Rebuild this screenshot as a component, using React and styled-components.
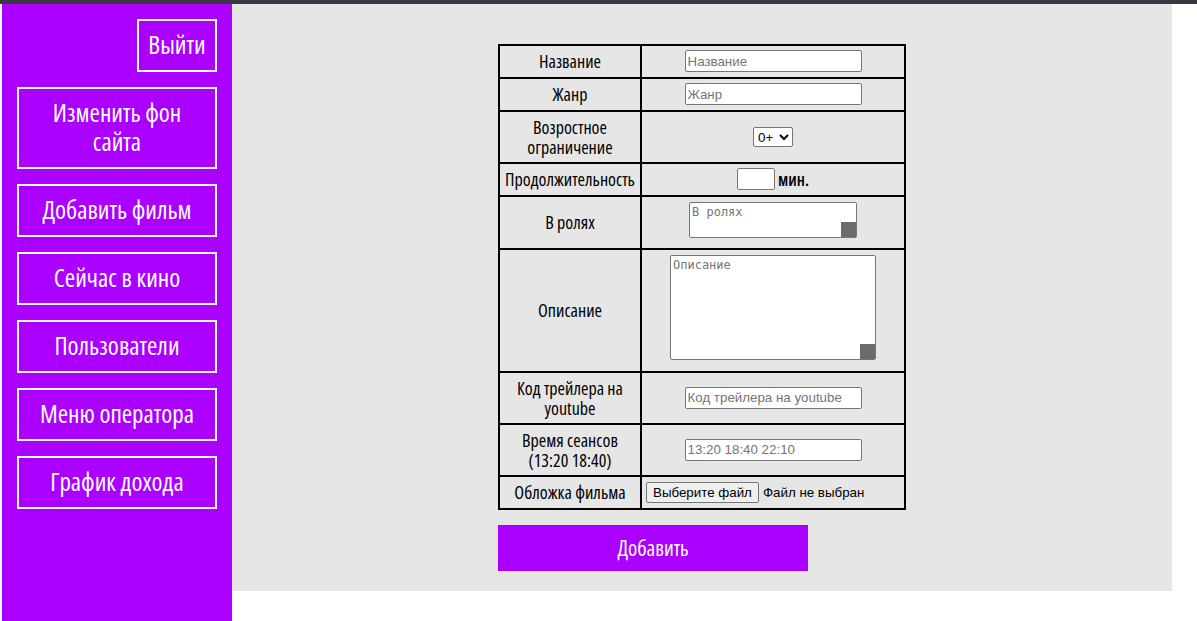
import React from "react";
import styled, { createGlobalStyle } from "styled-components";

const condensed = `"Open Sans", sans-serif`;

const GlobalStyle = createGlobalStyle`
    html, body {
        margin: 0;
        padding: 0;
        background: #ffffff;
    }
`;

const menu = [
    { label: "Изменить фон сайта", tall: true },
    { label: "Добавить фильм" },
    { label: "Сейчас в кино" },
    { label: "Пользователи" },
    { label: "Меню оператора" },
    { label: "График дохода" }
];

const App = () => {
    return (
        <>
            <GlobalStyle />
            <StyledTopBar />
            <StyledPage>
                <StyledSidebar>
                    <StyledExit>Выйти</StyledExit>
                    {menu.map((item, i) => (
                        <StyledMenuButton key={`menu-${i}`} $tall={item.tall}>
                            {item.label}
                        </StyledMenuButton>
                    ))}
                </StyledSidebar>
                <StyledMain>
                    <StyledForm>
                        <StyledTable>
                            <colgroup>
                                <col style={{ width: 142 }} />
                                <col />
                            </colgroup>
                            <tbody>
                                <StyledRow $h={33}>
                                    <StyledLabel>Название</StyledLabel>
                                    <StyledCell>
                                        <StyledInput placeholder="Название" />
                                    </StyledCell>
                                </StyledRow>
                                <StyledRow $h={33}>
                                    <StyledLabel>Жанр</StyledLabel>
                                    <StyledCell>
                                        <StyledInput placeholder="Жанр" />
                                    </StyledCell>
                                </StyledRow>
                                <StyledRow $h={52}>
                                    <StyledLabel>Возростное ограничение</StyledLabel>
                                    <StyledCell>
                                        <StyledSelect defaultValue="0+">
                                            <option>0+</option>
                                            <option>6+</option>
                                            <option>12+</option>
                                            <option>16+</option>
                                            <option>18+</option>
                                        </StyledSelect>
                                    </StyledCell>
                                </StyledRow>
                                <StyledRow $h={33}>
                                    <StyledLabel>Продолжительность</StyledLabel>
                                    <StyledCell>
                                        <StyledDuration>
                                            <StyledSmallInput />
                                            <StyledUnit>мин.</StyledUnit>
                                        </StyledDuration>
                                    </StyledCell>
                                </StyledRow>
                                <StyledRow $h={53}>
                                    <StyledLabel>В ролях</StyledLabel>
                                    <StyledCell>
                                        <StyledTextarea $w={168} $h={36} placeholder="В ролях" />
                                    </StyledCell>
                                </StyledRow>
                                <StyledRow $h={123}>
                                    <StyledLabel>Описание</StyledLabel>
                                    <StyledCell>
                                        <StyledTextarea $w={206} $h={105} placeholder="Описание" />
                                    </StyledCell>
                                </StyledRow>
                                <StyledRow $h={52}>
                                    <StyledLabel>Код трейлера на youtube</StyledLabel>
                                    <StyledCell>
                                        <StyledInput placeholder="Код трейлера на youtube" />
                                    </StyledCell>
                                </StyledRow>
                                <StyledRow $h={52}>
                                    <StyledLabel>Время сеансов (13:20 18:40)</StyledLabel>
                                    <StyledCell>
                                        <StyledInput placeholder="13:20 18:40 22:10" />
                                    </StyledCell>
                                </StyledRow>
                                <StyledRow $h={33}>
                                    <StyledLabel>Обложка фильма</StyledLabel>
                                    <StyledCell>
                                        <StyledFile>
                                            <StyledFileButton type="button">Выберите файл</StyledFileButton>
                                            <StyledFileText>Файл не выбран</StyledFileText>
                                        </StyledFile>
                                    </StyledCell>
                                </StyledRow>
                            </tbody>
                        </StyledTable>
                        <StyledSubmit type="button">Добавить</StyledSubmit>
                    </StyledForm>
                </StyledMain>
            </StyledPage>
        </>
    );
};

export default App;

const StyledTopBar = styled.div`
    height: 4px;
    background: #383842;
`;

const StyledPage = styled.div`
    display: flex;
    align-items: flex-start;
    padding-left: 2px;
    height: 617px;
    overflow: hidden;
`;

const StyledSidebar = styled.nav`
    width: 230px;
    height: 617px;
    flex-shrink: 0;
    box-sizing: border-box;
    background: #ab00ff;
    padding: 15px 15px 0 15px;
    display: flex;
    flex-direction: column;
    align-items: flex-end;
    gap: 15px;
`;

const StyledBaseButton = styled.div`
    box-sizing: border-box;
    border: 2px solid #ffffff;
    color: #ffffff;
    font-family: ${condensed};
    font-stretch: 75%;
    font-weight: 500;
    font-size: 25px;
    line-height: 29px;
    display: flex;
    align-items: center;
    justify-content: center;
    text-align: center;
    padding-bottom: 2px;
    cursor: pointer;
`;

const StyledExit = styled(StyledBaseButton)`
    width: 80px;
    height: 53px;
`;

const StyledMenuButton = styled(StyledBaseButton)`
    width: 200px;
    height: ${(p) => (p.$tall ? "82px" : "53px")};
    padding-left: 12px;
    padding-right: 12px;
`;

const StyledMain = styled.main`
    width: 940px;
    height: 587px;
    flex-shrink: 0;
    box-sizing: border-box;
    background: #e6e6e6;
    padding-top: 40px;
    display: flex;
    justify-content: center;
`;

const StyledForm = styled.div`
    width: 408px;
    display: flex;
    flex-direction: column;
    align-items: flex-start;
`;

const StyledTable = styled.table`
    width: 408px;
    border-collapse: collapse;
    table-layout: fixed;
    border: 2px solid #000000;
`;

const StyledRow = styled.tr`
    height: ${(p) => p.$h}px;
`;

const StyledLabel = styled.td`
    border: 2px solid #000000;
    padding: 0 4px 1px;
    text-align: center;
    vertical-align: middle;
    font-family: ${condensed};
    font-stretch: 75%;
    font-weight: 500;
    font-size: 18px;
    line-height: 20px;
    color: #000000;
`;

const StyledCell = styled.td`
    border: 2px solid #000000;
    padding: 0;
    text-align: center;
    vertical-align: middle;
`;

const StyledInput = styled.input`
    box-sizing: border-box;
    width: 177px;
    height: 22px;
    border: 1px solid #767676;
    border-radius: 2px;
    padding: 1px 2px;
    margin-bottom: 1px;
    font-family: "Liberation Sans", Arial, sans-serif;
    font-size: 13.33px;
    background: #ffffff;
    vertical-align: middle;

    &::placeholder {
        color: #757575;
    }
`;

const StyledSelect = styled.select`
    box-sizing: border-box;
    width: 40px;
    height: 20px;
    font-family: "Liberation Sans", Arial, sans-serif;
    font-size: 13.33px;
    border: 1px solid #767676;
    border-radius: 2px;
    background: #ffffff;
    vertical-align: middle;
`;

const StyledDuration = styled.div`
    display: inline-flex;
    align-items: center;
    gap: 3px;
`;

const StyledSmallInput = styled(StyledInput)`
    width: 38px;
`;

const StyledUnit = styled.span`
    font-family: ${condensed};
    font-stretch: 75%;
    font-size: 17px;
    font-weight: 600;
    color: #000000;
`;

const StyledTextarea = styled.textarea`
    box-sizing: border-box;
    width: ${(p) => p.$w}px;
    height: ${(p) => p.$h}px;
    border: 1px solid #767676;
    border-radius: 2px;
    padding: 2px;
    margin-bottom: 6px;
    font-family: "DejaVu Sans Mono", monospace;
    font-size: 12px;
    vertical-align: middle;
    background: #ffffff;
    resize: both;

    &::placeholder {
        color: #757575;
    }
    &::-webkit-scrollbar {
        width: 0;
        height: 0;
    }
    &::-webkit-resizer {
        background: #6b6b6b;
    }
`;

const StyledFile = styled.div`
    width: 254px;
    margin: 0 auto;
    display: flex;
    align-items: center;
    gap: 4px;
`;

const StyledFileButton = styled.button`
    box-sizing: border-box;
    height: 21px;
    padding: 1px 6px;
    border: 1px solid #767676;
    border-radius: 2px;
    background: #efefef;
    font-family: "Liberation Sans", Arial, sans-serif;
    font-size: 13.33px;
    color: #000000;
`;

const StyledFileText = styled.span`
    font-family: "Liberation Sans", Arial, sans-serif;
    font-size: 13.33px;
    color: #000000;
`;

const StyledSubmit = styled.button`
    margin-top: 15px;
    width: 310px;
    height: 46px;
    border: none;
    background: #ab00ff;
    color: #ffffff;
    font-family: ${condensed};
    font-stretch: 75%;
    font-weight: 500;
    font-size: 21px;
    padding-bottom: 2px;
    cursor: pointer;
`;
